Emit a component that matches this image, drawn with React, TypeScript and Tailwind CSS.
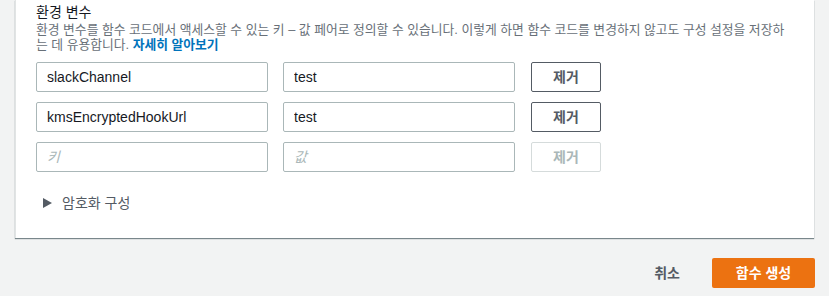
import { useState } from "react";

type EnvVar = { key: string; value: string };

const font = "font-['Liberation_Sans','Noto_Sans_CJK_KR',sans-serif]";

export default function App() {
  const [vars, setVars] = useState<EnvVar[]>([
    { key: "slackChannel", value: "test" },
    { key: "kmsEncryptedHookUrl", value: "test" },
  ]);

  const upd = (i: number, k: keyof EnvVar, v: string) =>
    setVars((list) => list.map((row, j) => (j === i ? { ...row, [k]: v } : row)));

  return (
    <div className={`h-[296px] w-full overflow-hidden bg-[#f2f3f3] text-[#16191f] ${font}`}>
      <div className="mx-[15px] border-l border-[#e1e4e4] bg-white px-5 pb-[25px] pt-[2px] shadow-[0_1px_1px_0_rgba(0,28,36,0.5)]">
        <h3 className="text-[14px] leading-5 text-[#16191f]">환경 변수</h3>
        <p className="text-[12.8px] leading-[15px] text-[#687078]">
          환경 변수를 함수 코드에서 액세스할 수 있는 키 – 값 페어로 정의할 수 있습니다. 이렇게 하면 함수 코드를
          변경하지 않고도 구성 설정을 저장하는 데 유용합니다.{" "}
          <a className="font-bold text-[#0073bb]">자세히 알아보기</a>
        </p>

        <div className="mt-[10px] flex flex-col gap-[10px]">
          {vars.map((row, i) => (
            <Row
              key={i}
              k={row.key}
              v={row.value}
              onKey={(v) => upd(i, "key", v)}
              onValue={(v) => upd(i, "value", v)}
              onRemove={() => setVars((l) => l.filter((_, j) => j !== i))}
            />
          ))}
          <Row k="" v="" disabled />
        </div>

        <div className="mt-[21px] flex items-center pl-[7px] text-[14px] leading-5 text-[#545b64]">
          <svg width="9" height="10" viewBox="0 0 9 10" className="mr-[10px]">
            <path d="M0 0 L9 5 L0 10 Z" fill="#545b64" />
          </svg>
          암호화 구성
        </div>
      </div>

      <div className="mr-[14px] mt-[20px] flex items-center justify-end">
        <button className="mr-[32px] text-[14px] font-bold text-[#545b64]">취소</button>
        <button className="h-[30px] w-[103px] rounded-[2px] bg-[#ec7211] text-[14px] font-bold text-white">
          함수 생성
        </button>
      </div>
    </div>
  );
}

function Row({
  k,
  v,
  disabled = false,
  onKey,
  onValue,
  onRemove,
}: {
  k: string;
  v: string;
  disabled?: boolean;
  onKey?: (v: string) => void;
  onValue?: (v: string) => void;
  onRemove?: () => void;
}) {
  const input =
    "h-[30px] w-[232px] rounded-[2px] border border-[#aab7b8] px-[10px] text-[14px] text-[#16191f] outline-none placeholder:italic placeholder:text-[#aab7b8]";
  return (
    <div className="flex items-center">
      <input className={input} value={k} placeholder="키" onChange={(e) => onKey?.(e.target.value)} />
      <input
        className={`${input} ml-[15px]`}
        value={v}
        placeholder="값"
        onChange={(e) => onValue?.(e.target.value)}
      />
      <button
        onClick={onRemove}
        disabled={disabled}
        className={
          disabled
            ? "ml-[16px] h-[30px] w-[70px] rounded-[2px] border border-[#d5dbdb] text-[14px] font-bold text-[#aab7b8]"
            : "ml-[16px] h-[30px] w-[70px] rounded-[2px] border border-[#545b64] text-[14px] font-bold text-[#545b64]"
        }
      >
        제거
      </button>
    </div>
  );
}
